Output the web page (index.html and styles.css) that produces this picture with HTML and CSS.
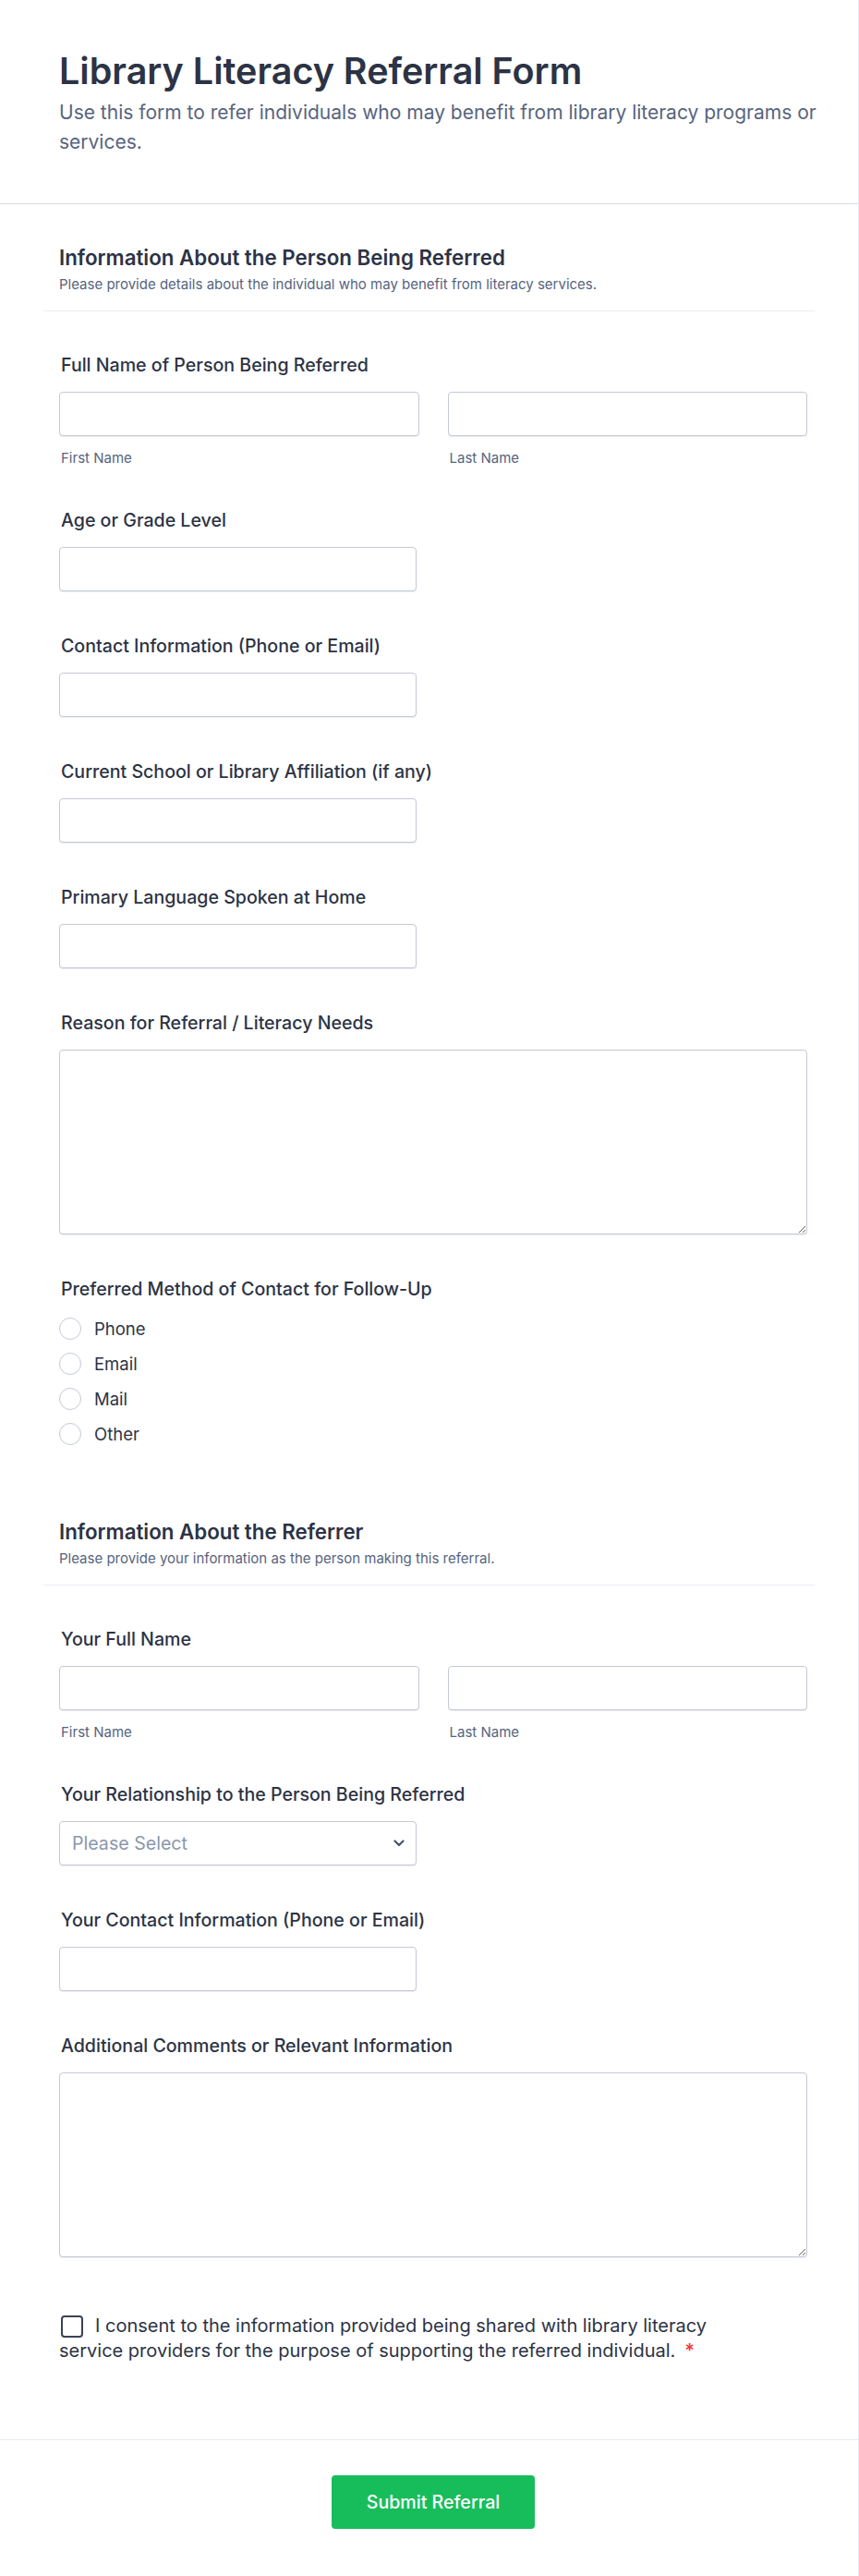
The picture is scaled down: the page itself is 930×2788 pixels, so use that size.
FILE: index.html
```html
<!DOCTYPE html>
<html lang="en">
<head>
<meta charset="utf-8">
<title>Library Literacy Referral Form</title>
<link rel="stylesheet" href="styles.css">
</head>
<body>
<div class="page">
  <header class="header">
    <h1 class="title">Library Literacy Referral Form</h1>
    <p class="subtitle">Use this form to refer individuals who may benefit from library literacy programs or services.</p>
  </header>

  <main class="form">
    <section class="section">
      <div class="section-head">
        <h2 class="section-title">Information About the Person Being Referred</h2>
        <p class="section-desc">Please provide details about the individual who may benefit from literacy services.</p>
      </div>
      <div class="section-body">
        <div class="field field-name">
          <label class="label">Full Name of Person Being Referred</label>
          <div class="name-row">
            <div class="name-col">
              <input class="input" type="text">
              <span class="sublabel">First Name</span>
            </div>
            <div class="name-col">
              <input class="input" type="text">
              <span class="sublabel">Last Name</span>
            </div>
          </div>
        </div>
        <div class="field">
          <label class="label">Age or Grade Level</label>
          <input class="input input-short" type="text">
        </div>
        <div class="field">
          <label class="label">Contact Information (Phone or Email)</label>
          <input class="input input-short" type="text">
        </div>
        <div class="field">
          <label class="label">Current School or Library Affiliation (if any)</label>
          <input class="input input-short" type="text">
        </div>
        <div class="field">
          <label class="label">Primary Language Spoken at Home</label>
          <input class="input input-short" type="text">
        </div>
        <div class="field">
          <label class="label">Reason for Referral / Literacy Needs</label>
          <textarea class="textarea"></textarea>
        </div>
        <div class="field field-radio">
          <div class="label label-radio">Preferred Method of Contact for Follow-Up</div>
          <div class="radio-list">
            <div class="radio-row"><span class="radio"></span><span class="radio-text">Phone</span></div>
            <div class="radio-row"><span class="radio"></span><span class="radio-text">Email</span></div>
            <div class="radio-row"><span class="radio"></span><span class="radio-text">Mail</span></div>
            <div class="radio-row"><span class="radio"></span><span class="radio-text">Other</span></div>
          </div>
        </div>
      </div>
    </section>

    <section class="section">
      <div class="section-head">
        <h2 class="section-title">Information About the Referrer</h2>
        <p class="section-desc">Please provide your information as the person making this referral.</p>
      </div>
      <div class="section-body">
        <div class="field field-name">
          <label class="label">Your Full Name</label>
          <div class="name-row">
            <div class="name-col">
              <input class="input" type="text">
              <span class="sublabel">First Name</span>
            </div>
            <div class="name-col">
              <input class="input" type="text">
              <span class="sublabel">Last Name</span>
            </div>
          </div>
        </div>
        <div class="field">
          <label class="label">Your Relationship to the Person Being Referred</label>
          <div class="select-wrap">
            <select class="select">
              <option>Please Select</option>
            </select>
            <svg class="chevron" width="12" height="8" viewBox="0 0 12 8" aria-hidden="true">
              <path d="M1.5 1.5 L6 6 L10.5 1.5" fill="none" stroke="#4b5468" stroke-width="2.2" stroke-linecap="round" stroke-linejoin="round"/>
            </svg>
          </div>
        </div>
        <div class="field">
          <label class="label">Your Contact Information (Phone or Email)</label>
          <input class="input input-short" type="text">
        </div>
        <div class="field">
          <label class="label">Additional Comments or Relevant Information</label>
          <textarea class="textarea"></textarea>
        </div>
        <div class="consent">
          <p class="consent-text"><span class="checkbox"></span>I consent to the information provided being shared with library literacy service providers for the purpose of supporting the referred individual.<span class="required">*</span></p>
        </div>
      </div>
    </section>
  </main>

  <footer class="footer">
    <button class="submit" type="button">Submit Referral</button>
  </footer>
</div>
</body>
</html>
```

FILE: styles.css
```css
* {
  box-sizing: border-box;
}

html, body {
  margin: 0;
  padding: 0;
  background: #ffffff;
}

body {
  font-family: Inter, "Noto Sans", "Liberation Sans", sans-serif;
  color: #2c3345;
}

.page {
  width: 930px;
  border-right: 1px solid #e9ebf0;
  background: #ffffff;
}

/* Header */
.header {
  padding: 54px 20px 50px 64px;
  border-bottom: 1px solid #d8dbe4;
}

.title {
  margin: 0;
  font-size: 39.5px;
  line-height: 46px;
  font-weight: 600;
  color: #2c3345;
}

.subtitle {
  margin: 6px 0 0;
  font-size: 21px;
  line-height: 32px;
  font-weight: 400;
  color: #57647e;
}

/* Form */
.form {
  margin: 0 47px;
}

.section {
  padding-top: 44px;
}

.section-head {
  padding: 0 17px 19px;
  border-bottom: 1px solid #eceef3;
}

.section-title {
  margin: 0;
  font-size: 22.3px;
  line-height: 28px;
  font-weight: 600;
  color: #2c3345;
}

.section-desc {
  margin: 6px 0 0;
  font-size: 15px;
  line-height: 18px;
  color: #57647e;
}

.section-body {
  padding-top: 46px;
}

.field {
  padding: 0 8px 0 17px;
  margin-bottom: 47px;
}

.field-name {
  margin-bottom: 45px;
}

.label {
  display: block;
  padding-left: 2px;
  margin-bottom: 17px;
  font-size: 19.6px;
  line-height: 24px;
  font-weight: 500;
  color: #2c3345;
}

.input,
.textarea,
.select {
  display: block;
  margin: 0;
  border: 1px solid #c5c9d6;
  border-radius: 4px;
  background: #ffffff;
  font-family: inherit;
  font-size: 19.6px;
  color: #2c3345;
  box-shadow: 0 1px 0 rgba(200, 204, 216, 0.35);
}

.input {
  width: 100%;
  height: 48px;
  padding: 0 13px;
}

.input-short {
  width: 387px;
}

.name-row {
  display: grid;
  grid-template-columns: 1fr 1fr;
  column-gap: 31px;
}

.name-col {
  display: flex;
  flex-direction: column;
}

.sublabel {
  display: block;
  margin-top: 14px;
  padding-left: 2px;
  font-size: 15px;
  line-height: 20px;
  color: #57647e;
}

.textarea {
  width: 100%;
  height: 200px;
  padding: 10px 13px;
  resize: vertical;
}

/* Select */
.select-wrap {
  position: relative;
  width: 387px;
}

.select {
  width: 100%;
  height: 48px;
  padding: 0 40px 0 13px;
  appearance: none;
  -webkit-appearance: none;
  color: #8a97ad;
}

.chevron {
  position: absolute;
  right: 13px;
  top: 20px;
  pointer-events: none;
}

/* Radios */
.field-radio {
  margin-bottom: 29px;
}

.label-radio {
  margin-bottom: 12px;
}

.radio-list {
  display: flex;
  flex-direction: column;
}

.radio-row {
  display: flex;
  align-items: center;
  height: 38px;
}

.radio {
  width: 24px;
  height: 24px;
  border: 1.5px solid #c4c9d6;
  border-radius: 50%;
  background: #ffffff;
  margin-right: 14px;
  flex-shrink: 0;
}

.radio-text {
  font-size: 18.5px;
  line-height: 24px;
  color: #2c3345;
}

/* Consent */
.consent {
  padding: 14px 8px 0 17px;
  margin-bottom: 82px;
}

.consent-text {
  margin: 0;
  max-width: 730px;
  font-size: 20px;
  line-height: 27px;
  color: #2c3345;
}

.checkbox {
  display: inline-block;
  width: 24px;
  height: 24px;
  margin-left: 2px;
  margin-right: 13px;
  border: 2px solid #3a4256;
  border-radius: 4px;
  vertical-align: -6px;
}

.required {
  margin-left: 10px;
  color: #f23a3c;
  font-weight: 600;
}

/* Footer */
.footer {
  display: flex;
  justify-content: center;
  padding: 38px 55px 51px 64px;
  border-top: 1px solid #e6e8ee;
}

.submit {
  height: 58px;
  padding: 0 38px;
  border: none;
  border-radius: 4px;
  background: #18bd5b;
  color: #ffffff;
  font-family: inherit;
  font-size: 19.6px;
  font-weight: 500;
  cursor: pointer;
}
```
